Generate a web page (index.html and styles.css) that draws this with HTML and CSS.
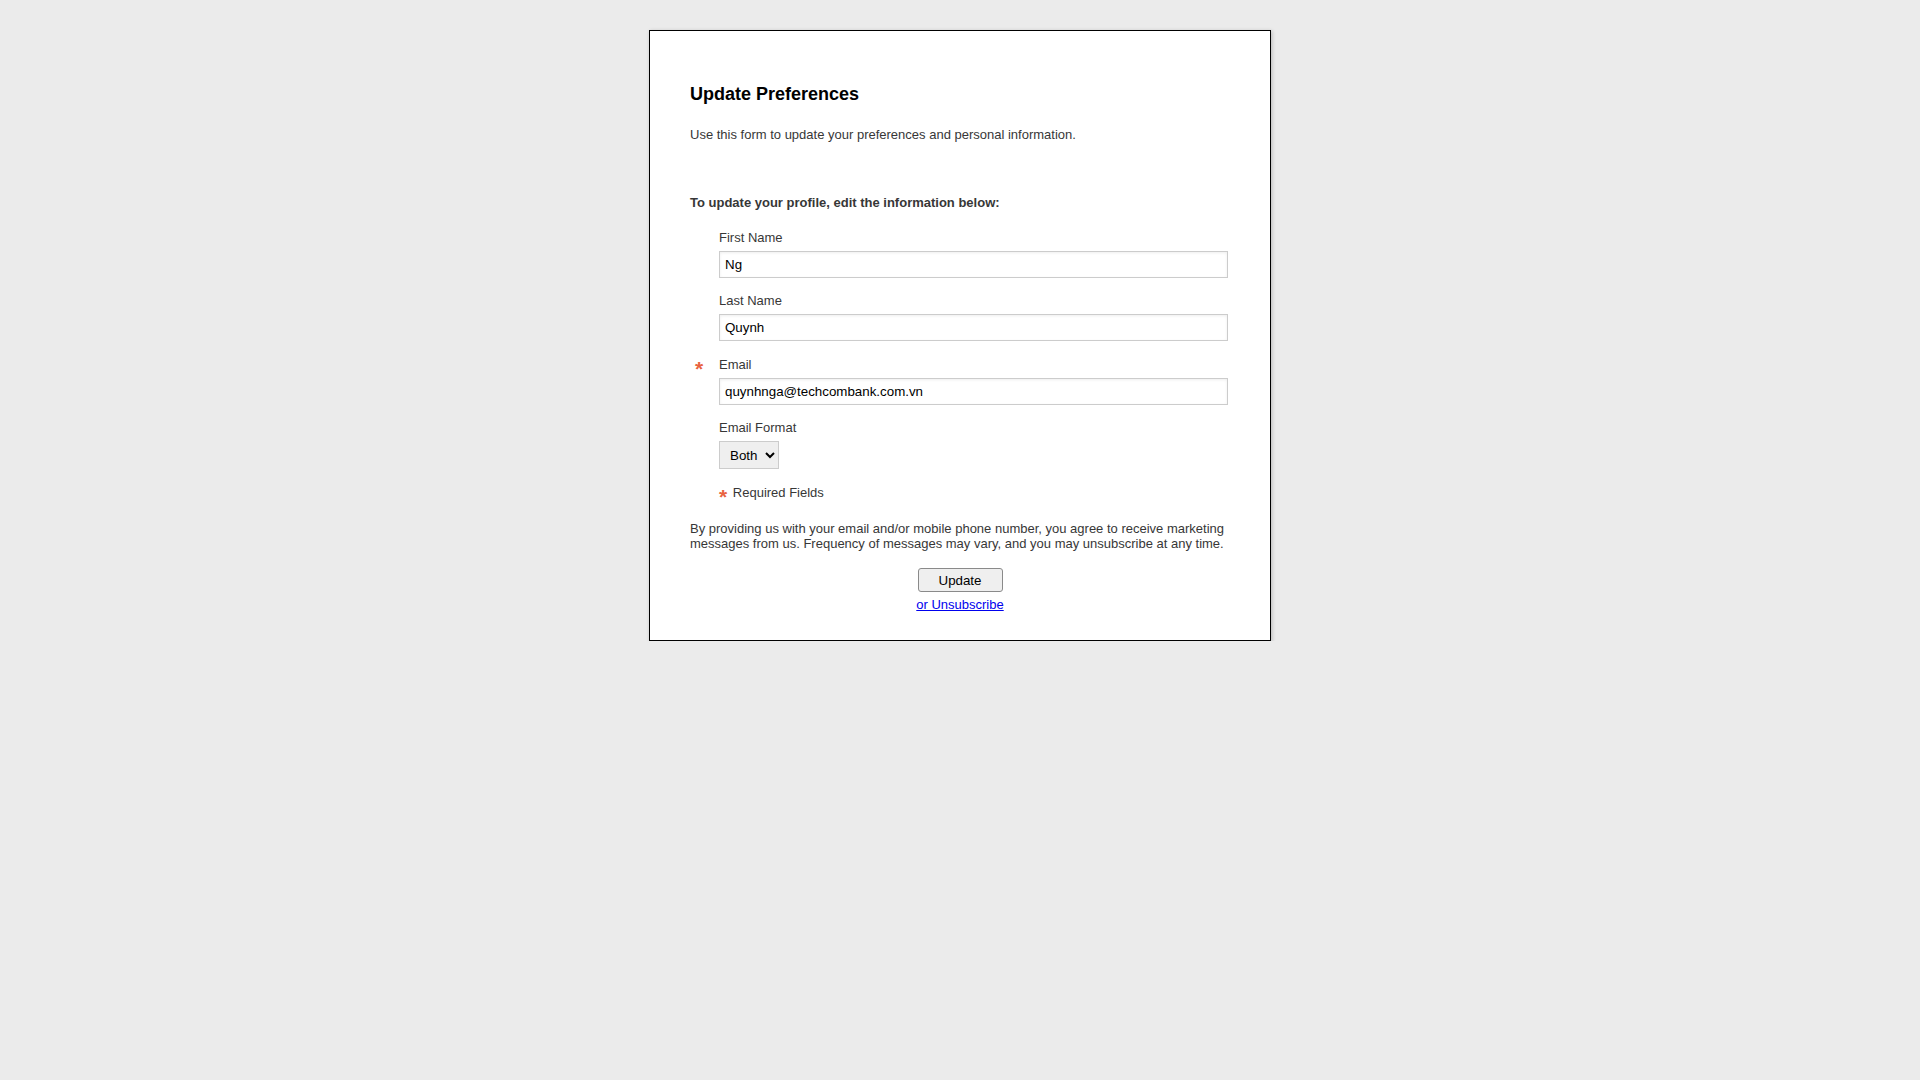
FILE: index.html
```html
<!DOCTYPE html>
<html lang="en">
<head>
<meta charset="utf-8">
<title>Update Preferences</title>
<link rel="stylesheet" href="styles.css">
</head>
<body>
<div class="page">
  <div class="card">
    <h1 class="title">Update Preferences</h1>
    <p class="intro">Use this form to update your preferences and personal information.</p>
    <h2 class="subtitle">To update your profile, edit the information below:</h2>
    <form class="form" action="#">
      <div class="fields">
        <div class="field">
          <label class="label" for="fname">First Name</label>
          <input class="input" id="fname" type="text" value="Ng">
        </div>
        <div class="field">
          <label class="label" for="lname">Last Name</label>
          <input class="input" id="lname" type="text" value="Quynh">
        </div>
        <div class="field field-required">
          <span class="req-mark">*</span>
          <label class="label" for="email">Email</label>
          <input class="input" id="email" type="text" value="quynhnga@techcombank.com.vn">
        </div>
        <div class="field">
          <label class="label" for="format">Email Format</label>
          <select class="select" id="format">
            <option>Both</option>
            <option>HTML</option>
            <option>Text</option>
          </select>
        </div>
        <p class="required"><span class="asterisk">*</span> Required Fields</p>
      </div>
      <p class="disclaimer">By providing us with your email and/or mobile phone number, you agree to receive marketing messages from us. Frequency of messages may vary, and you may unsubscribe at any time.</p>
      <div class="actions">
        <button class="btn" type="button">Update</button>
        <a class="unsub" href="#">or Unsubscribe</a>
      </div>
    </form>
  </div>
</div>
</body>
</html>
```

FILE: styles.css
```css
html, body {
  margin: 0;
  padding: 0;
}

body {
  background: #ebebeb;
  font-family: "Liberation Sans", Arial, sans-serif;
  color: #373737;
}

.page {
  padding-top: 30px;
}

.card {
  width: 540px;
  margin: 0 auto;
  padding: 40px 40px 27px;
  background: #fff;
  border: 1px solid #000;
  box-shadow: 1px 1px 4px rgba(0, 0, 0, 0.22);
}

.title {
  margin: 12px 0 0;
  font-size: 18px;
  line-height: 22px;
  font-weight: bold;
  color: #000;
}

.intro {
  margin: 22px 0 0;
  font-size: 13px;
  line-height: 15px;
}

.subtitle {
  margin: 53px 0 0;
  font-size: 13px;
  line-height: 15px;
  font-weight: bold;
}

.form {
  margin: 20px 0 0;
}

.fields {
  padding-left: 29px;
}

.field {
  position: relative;
}

.field + .field {
  margin-top: 15px;
}

.field + .field-required {
  margin-top: 16px;
}

.label {
  display: block;
  margin-bottom: 6px;
  font-size: 13px;
  line-height: 15px;
}

.input {
  display: block;
  box-sizing: border-box;
  width: 509px;
  height: 27px;
  margin: 0;
  padding: 0 5px;
  border: 1px solid #ccc;
  border-radius: 0;
  background: #fff;
  box-shadow: inset 0 1px 3px rgba(0, 0, 0, 0.07);
  font-family: "Liberation Sans", Arial, sans-serif;
  font-size: 13.333px;
  color: #000;
  outline: none;
}

.select {
  display: block;
  box-sizing: border-box;
  width: 60px;
  height: 28px;
  margin: 0;
  padding: 0 3px 0 6px;
  border: 1px solid #ccc;
  border-radius: 0;
  background: #efefef;
  font-family: "Liberation Sans", Arial, sans-serif;
  font-size: 13.333px;
  color: #000;
}

.req-mark {
  position: absolute;
  left: -24px;
  top: 3px;
  font-size: 21px;
  line-height: 18px;
  font-weight: bold;
  color: #e8633f;
}

.required {
  margin: 16px 0 0;
  font-size: 13px;
  line-height: 15px;
}

.asterisk {
  position: relative;
  top: 7px;
  margin-right: 2px;
  font-size: 21px;
  line-height: 0;
  font-weight: bold;
  color: #e8633f;
}

.disclaimer {
  margin: 21px 0 0;
  font-size: 13px;
  line-height: 15px;
}

.actions {
  margin-top: 17px;
  text-align: center;
}

.btn {
  display: block;
  box-sizing: border-box;
  width: 85px;
  height: 24px;
  margin: 0 auto;
  padding: 0;
  border: 1px solid #8a8a8a;
  border-radius: 3px;
  background: #efefef;
  font-family: "Liberation Sans", Arial, sans-serif;
  font-size: 13.333px;
  color: #000;
}

.unsub {
  display: inline-block;
  margin-top: 5px;
  font-size: 13px;
  line-height: 15px;
  color: #0000ee;
  text-decoration: underline;
}
```
